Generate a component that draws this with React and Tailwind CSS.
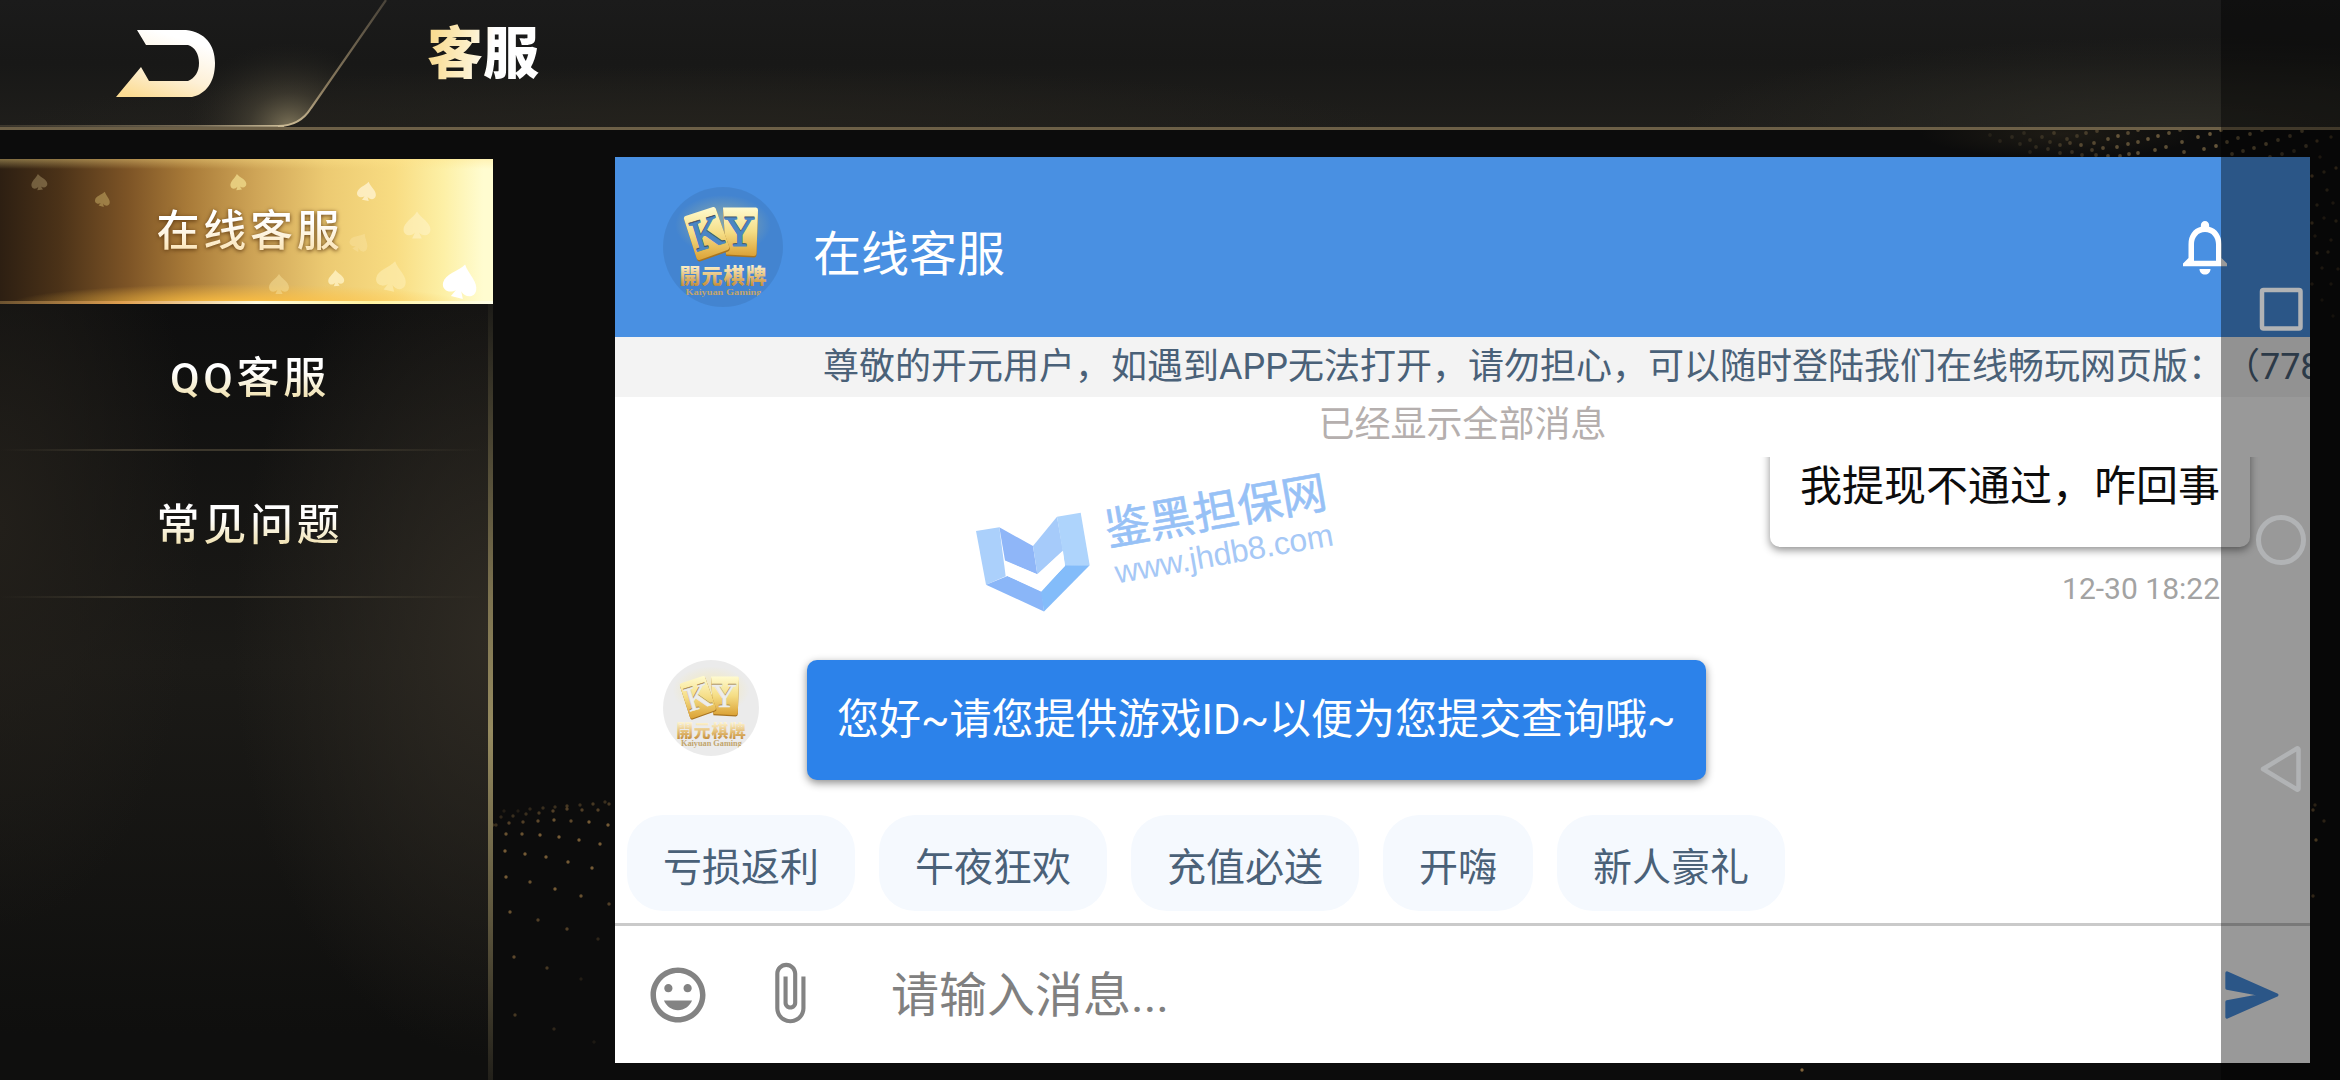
import React from "react";

const CHIPS = ["亏损返利", "午夜狂欢", "充值必送", "开嗨", "新人豪礼"];

const SPADES = [
  { x: 39, y: 37, s: 16, o: 0.35, r: -8, c: "#d8c48c" },
  { x: 103, y: 54, s: 15, o: 0.5, r: 14, c: "#cdb469" },
  { x: 238, y: 37, s: 16, o: 0.8, r: -8, c: "#efd98a" },
  { x: 367, y: 46, s: 19, o: 0.8, r: 10, c: "#fff3cf" },
  { x: 417, y: 80, s: 27, o: 0.5, r: 0, c: "#fff6cf" },
  { x: 360, y: 97, s: 19, o: 0.35, r: 30, c: "#fbe7ae" },
  { x: 279, y: 139, s: 20, o: 0.5, r: 0, c: "#f7e19c" },
  { x: 336, y: 133, s: 16, o: 0.8, r: -5, c: "#fff3c4" },
  { x: 392, y: 131, s: 30, o: 0.6, r: 12, c: "#fdeeb4" },
  { x: 461, y: 136, s: 34, o: 1, r: 14, c: "#ffffff" },
];

const LOWER_DOTS = [
  [493, 825, 0.4], [501, 817, 0.3], [513, 816, 0.4], [526, 814, 0.4], [539, 813, 0.5], [553, 811, 0.6], [567, 809, 0.6], [582, 810, 0.6], [598, 810, 0.6],
  [504, 811, 0.2], [518, 811, 0.2], [530, 809, 0.3], [543, 808, 0.4], [555, 807, 0.4], [567, 806, 0.5], [580, 805, 0.4], [593, 804, 0.5], [605, 802, 0.4], [609, 804, 0.5],
  [496, 825, 0.4], [509, 823, 0.6], [523, 822, 0.6], [538, 821, 0.7], [554, 820, 0.8], [571, 821, 0.7], [589, 822, 0.9], [608, 825, 0.9],
  [506, 834, 0.8], [522, 834, 0.8], [540, 835, 0.9], [559, 837, 0.9], [579, 840, 0.9], [600, 844, 0.9],
  [505, 851, 0.9], [525, 854, 0.9], [546, 857, 0.9], [568, 862, 0.9], [592, 868, 0.9],
  [506, 877, 0.9], [530, 882, 0.8], [555, 889, 0.9], [581, 896, 0.8], [609, 904, 0.6],
  [510, 912, 0.8], [538, 920, 0.6], [567, 929, 0.6], [598, 939, 0.3],
  [514, 957, 0.7], [547, 968, 0.5], [581, 979, 0.2],
  [515, 1015, 0.5], [554, 1029, 0.3], [594, 1042, 0.15],
  [477, 836, 0.3], [487, 850, 0.3], [484, 873, 0.5], [483, 904, 0.5], [481, 946, 0.5], [477, 1002, 0.7],
];

const SIDE_DOTS = [
  [2317, 141, 0.5], [2331, 137, 0.4], [2320, 157, 0.3], [2336, 168, 0.5], [2312, 176, 0.6], [2324, 172, 0.4], [2327, 190, 0.4], [2317, 205, 0.4], [2333, 203, 0.3],
  [2312, 223, 0.5], [2324, 218, 0.3], [2336, 221, 0.4], [2315, 236, 0.3], [2331, 240, 0.3], [2317, 253, 0.5], [2328, 252, 0.4], [2338, 269, 0.3], [2322, 268, 0.3],
  [2312, 284, 0.3], [2331, 284, 0.25], [2322, 300, 0.2], [2333, 316, 0.2],
  [2315, 805, 0.5], [2313, 810, 0.7], [2324, 821, 0.5], [2316, 840, 0.9], [2313, 896, 0.6],
  [1802, 1070, 1],
];

const TOP_DOTS = [
  [2042, 137, 0.4], [2054, 133, 0.5], [2067, 139, 0.5], [2077, 136, 0.5], [2086, 133, 0.6], [2097, 131, 0.6],
  [2060, 145, 0.5], [2070, 143, 0.6], [2081, 145, 0.8], [2094, 143, 0.8], [2108, 139, 0.9], [2118, 136, 1], [2128, 133, 0.8], [2138, 130, 0.8],
  [2092, 150, 0.6], [2103, 148, 0.8], [2117, 147, 0.9], [2128, 144, 0.9], [2138, 142, 0.9], [2148, 139, 1], [2158, 136, 1], [2169, 133, 0.9], [2180, 130, 0.7],
  [2096, 155, 0.5], [2108, 156, 0.7], [2120, 156, 0.7], [2129, 154, 0.8], [2138, 153, 0.9], [2155, 150, 0.9], [2166, 147, 0.9], [2182, 142, 0.9], [2198, 137, 1], [2210, 134, 1], [2221, 130, 1],
  [2184, 152, 0.8], [2204, 149, 0.9], [2216, 146, 1], [2227, 142, 0.9], [2238, 138, 0.9], [2250, 134, 1], [2262, 130, 0.9],
  [2232, 154, 0.8], [2243, 151, 0.8], [2254, 148, 1], [2266, 144, 1], [2278, 140, 0.8], [2290, 136, 0.7], [2302, 131, 0.8],
  [2270, 157, 0.7], [2282, 154, 0.6], [2294, 151, 0.5], [2306, 146, 0.7],
  [1990, 135, 0.2], [2000, 141, 0.25], [2012, 137, 0.3], [2020, 144, 0.3], [2030, 140, 0.35], [2024, 133, 0.3], [2036, 147, 0.35], [2048, 149, 0.4], [2050, 142, 0.4], [2030, 152, 0.25], [2060, 153, 0.4], [2072, 152, 0.45], [2082, 155, 0.45],
];

function Backdrop() {
  return (
    <svg className="pointer-events-none absolute inset-0" width="2340" height="1080" viewBox="0 0 2340 1080">
      <defs>
        <radialGradient id="haze">
          <stop offset="0" stopColor="#4a402a" stopOpacity="0.3" />
          <stop offset="1" stopColor="#4a402a" stopOpacity="0" />
        </radialGradient>
      </defs>
      <ellipse cx="2060" cy="134" rx="140" ry="24" fill="url(#haze)" />
      {TOP_DOTS.map(([x, y, o], i) => (
        <circle key={i} cx={x} cy={y} r="1.9" fill="#65553a" opacity={o} />
      ))}
      {LOWER_DOTS.concat(SIDE_DOTS).map(([x, y, o], i) => (
        <circle key={i} cx={x} cy={y} r="1.7" fill="#80633a" opacity={o} />
      ))}
    </svg>
  );
}

function HeaderArt() {
  return (
    <svg className="absolute left-0 top-0" width="440" height="130" viewBox="0 0 440 130">
      <defs>
        <linearGradient id="tabEdge" x1="0" y1="1" x2="0" y2="0">
          <stop offset="0" stopColor="#c9b893" />
          <stop offset="0.3" stopColor="#8a7b5f" />
          <stop offset="1" stopColor="#4a443a" />
        </linearGradient>
        <linearGradient id="tabBase" x1="0" x2="1">
          <stop offset="0" stopColor="#5a5140" stopOpacity="0.5" />
          <stop offset="0.7" stopColor="#7d715a" />
          <stop offset="1" stopColor="#cdbd98" />
        </linearGradient>
        <radialGradient id="tabGlow" gradientUnits="userSpaceOnUse" cx="290" cy="126" r="105" gradientTransform="translate(290 126) scale(1 0.8) translate(-290 -126)">
          <stop offset="0" stopColor="#8b8062" stopOpacity="0.85" />
          <stop offset="0.4" stopColor="#5b5442" stopOpacity="0.45" />
          <stop offset="1" stopColor="#2a2822" stopOpacity="0" />
        </radialGradient>
        <linearGradient id="arrow" x1="0.2" y1="1" x2="0.6" y2="0.1">
          <stop offset="0" stopColor="#fcdc93" />
          <stop offset="0.45" stopColor="#fdf0d6" />
          <stop offset="1" stopColor="#ffffff" />
        </linearGradient>
      </defs>
      <path d="M0 0H386L311 108Q300 126 278 126H0Z" fill="url(#tabGlow)" />
      <path d="M386 0L311 108Q300 126 278 126" fill="none" stroke="url(#tabEdge)" strokeWidth="2.2" />
      <rect x="0" y="125" width="284" height="1.8" fill="url(#tabBase)" />
      <path d="M137 30H186C205 32 215 45 215 63C215 82 206 94 192 97H116L141 67L149 81H188C195 78 199 72 199 63C199 54 195 47 188 45H146Z" fill="url(#arrow)" />
    </svg>
  );
}

function Spade({ x, y, s, o, r, c }) {
  return (
    <g transform={`translate(${x} ${y}) rotate(${r}) scale(${s / 20})`} opacity={o}>
      <path d="M0-10C3-5 10-2 10 3.4C10 8 4.500 9 1.600 5.800L3.600 10H-3.600L-1.600 5.800C-4.500 9-10 8-10 3.400C-10-2-3-5 0-10Z" fill={c} />
    </g>
  );
}

function NavItem({ label, active }) {
  if (active) {
    return (
      <div className="relative flex h-[145px] items-center justify-center overflow-hidden bg-[linear-gradient(90deg,#2d1f12_0%,#4b3218_12%,#7d5426_26%,#a87a38_38%,#cfa557_52%,#ecca72_66%,#f8dc82_80%,#fdf0a6_90%,#fffcd0_98%)]">
        <div className="absolute inset-0 bg-[radial-gradient(ellipse_230px_20px_at_240px_100%,#ffc040_0%,transparent_100%)]" />
        <div className="absolute inset-x-0 top-0 h-[10px] bg-[linear-gradient(180deg,#ffe48c66,transparent)]" />
        <div className="absolute inset-x-0 bottom-0 h-[3px] bg-[linear-gradient(90deg,#6b5230,#e0a050_25%,#fffbe0_52%,#fff2a0_75%,#ffffe8)]" />
        <svg className="absolute left-0 top-0" width="493" height="145" viewBox="0 0 493 145">
          {SPADES.map((p, i) => (
            <Spade key={i} {...p} y={p.y - 14} />
          ))}
        </svg>
        <span className="relative mt-[3px] ml-[7px] bg-[linear-gradient(180deg,#ffffff_30%,#fbe7bd_75%)] bg-clip-text pb-1 text-[43px] leading-[56px] font-medium tracking-[3.700px] text-transparent drop-shadow-[0_1px_2px_#5c3710]">
          {label}
        </span>
      </div>
    );
  }
  return (
    <div className="relative flex h-[147px] items-center justify-center">
      <span className="mt-[5px] ml-[7px] bg-[linear-gradient(180deg,#ffffff_35%,#f1e3b4_78%)] bg-clip-text pb-1 text-[43px] leading-[56px] font-medium tracking-[3.700px] text-transparent">
        {label}
      </span>
      <div className="absolute inset-x-0 bottom-0 h-[2px] bg-[linear-gradient(90deg,transparent,#3c372c_25%,#3c372c_70%,transparent_98%)]" />
    </div>
  );
}

function KyLogo({ id, size, letter, edge }) {
  return (
    <svg width={size} height={size} viewBox="0 0 120 120" className="shrink-0">
      <defs>
        <linearGradient id={id + "card"} x1="0" y1="0" x2="0" y2="1">
          <stop offset="0" stopColor="#fffbd0" />
          <stop offset="0.5" stopColor="#f5dd85" />
          <stop offset="1" stopColor="#dba236" />
        </linearGradient>
        <linearGradient id={id + "txt"} x1="0" y1="0" x2="0" y2="1">
          <stop offset="0.2" stopColor="#fdf3cf" />
          <stop offset="0.6" stopColor="#e2bb72" />
          <stop offset="1" stopColor="#b97c26" />
        </linearGradient>
        <radialGradient id={id + "glow"}>
          <stop offset="0.3" stopColor="#ffe46a" stopOpacity="0.7" />
          <stop offset="1" stopColor="#ffe46a" stopOpacity="0" />
        </radialGradient>
        <clipPath id={id + "clip"}>
          <circle cx="60" cy="60" r="60" />
        </clipPath>
      </defs>
      <circle cx="60" cy="60" r="60" fill="#000000" opacity="0.08" />
      <g clipPath={`url(#${id}clip)`}>
        <ellipse cx="60" cy="38" rx="48" ry="30" fill={`url(#${id}glow)`} opacity="0.45" />
        <path d="M60 20.500H93Q95 20.500 95 23L93.500 66Q93.400 69 91 69L63 67.500Z" fill="#a87420" transform="translate(0 1.500)" />
        <path d="M60 20.500H93Q95 20.500 95 23L93.500 66Q93.400 69 91 69L63 67.500Z" fill={`url(#${id}card)`} />
        <path d="M22.500 29L50 20Q52 19.500 52.700 21.500L66 59Q67 62 64.500 63L36.500 73Q34.300 73.500 33.600 71.300L21 32Q20.500 29.800 22.500 29Z" fill="#a87420" transform="translate(0.500 1.500)" />
        <path d="M22.500 29L50 20Q52 19.500 52.700 21.500L66 59Q67 62 64.500 63L36.500 73Q34.300 73.500 33.600 71.300L21 32Q20.500 29.800 22.500 29Z" fill={`url(#${id}card)`} />
        <g className="font-['Liberation_Serif',serif]" fontSize="43" textAnchor="middle">
          <text transform="translate(47.500 59) rotate(-17)" fill={edge} stroke={edge} strokeWidth="0.800">K</text>
          <text transform="translate(47.900 60.200) rotate(-17)" fill={letter} stroke={letter} strokeWidth="0.800">K</text>
          <text x="76.500" y="58" fill={edge} stroke={edge} strokeWidth="0.800">Y</text>
          <text x="76.900" y="59.200" fill={letter} stroke={letter} strokeWidth="0.800">Y</text>
        </g>
        <text x="16.500" y="96" textLength="87" fontSize="21" className="font-['Noto_Sans_CJK_TC',sans-serif] font-black" fill={`url(#${id}txt)`}>
          開元棋牌
        </text>
        <text x="22.500" y="107.500" textLength="76" lengthAdjust="spacingAndGlyphs" fontSize="9" className="font-['Liberation_Serif',serif] font-bold" fill="#c2a56c">
          Kaiyuan Gaming
        </text>
      </g>
    </svg>
  );
}

function Watermark() {
  return (
    <svg className="absolute left-[285px] top-[-17px]" width="460" height="200" viewBox="0 0 460 200">
      <polygon points="76,91 99.300,87.300 105.700,136.300 86,144.700" fill="#abd0fb" />
      <polygon points="99.300,87.300 133,106 137.300,134.300 105,120.500" fill="#8fb6f8" />
      <polygon points="133,106 157,76.700 163,110.500 137.300,134.300" fill="#a6cbfa" />
      <polygon points="157,76.700 180.700,72.700 189.700,125.300 165,126" fill="#aed4fc" />
      <polygon points="86,144.700 107.500,136 142,152 144,171.500" fill="#8ab6f8" />
      <polygon points="144,171.500 141,152 165,125.500 189.700,125.300" fill="#83bcfa" />
      <polygon points="105,121 137.500,134.500 163,111 165,126 141,151 107.500,136" fill="#ffffff" />
      <g transform="translate(208.500 107) rotate(-10)">
        <text x="0" y="-1" fontSize="45" textLength="224" className="font-['Noto_Sans_CJK_SC',sans-serif]" fill="#97c1f6" stroke="#97c1f6" strokeWidth="0.600">
          鉴黑担保网
        </text>
      </g>
      <g transform="translate(217 143.500) rotate(-10)">
        <text x="0" y="0" fontSize="32" textLength="221" className="font-['Liberation_Sans',sans-serif]" fill="#a6c8f6">
          www.jhdb8.com
        </text>
      </g>
    </svg>
  );
}

function ChatPanel() {
  return (
    <section className="flex h-[906px] w-[1695px] flex-col bg-white">
      <div className="flex h-[180px] shrink-0 items-center bg-[#4990e2] pr-[72px] pl-12">
        <KyLogo id="a" size={120} letter="#4a86c4" edge="#3f5468" />
        <h2 className="ml-[30px] flex-1 pt-4 text-[48px] leading-[60px] text-white">在线客服</h2>
        <svg width="66" height="66" viewBox="0 0 24 24" fill="#ffffff">
          <path d="M12 22c1.100 0 2-.7 2-2h-4c0 1.300.9 2 2 2zm6-6v-5c0-3.070-1.630-5.640-4.500-6.320V4c0-.83-.67-1.500-1.500-1.500s-1.500.67-1.500 1.500v.68C7.640 5.360 6 7.920 6 11v5l-2 2v1h16v-1l-2-2zm-2 1H8v-6c0-2.480 1.510-4.500 4-4.500s4 2.020 4 4.500v6z" />
        </svg>
      </div>
      <div className="h-[60px] shrink-0 overflow-hidden bg-[#f3f3f3] pl-[208px] text-[36px] leading-[60px] whitespace-nowrap text-[#4a6178] [text-spacing-trim:space-all]">
        尊敬的开元用户，如遇到APP无法打开，请勿担心，可以随时登陆我们在线畅玩网页版：（778
      </div>
      <div className="h-[60px] shrink-0 text-center text-[36px] leading-[56px] text-[#b5afae]">已经显示全部消息</div>
      <div className="relative flex h-[349px] shrink-0 flex-col overflow-hidden">
        <div className="-mt-[30px] mr-[60px] flex h-[120px] shrink-0 items-center self-end rounded-[10px] bg-white px-[30px] text-[42px] leading-[60px] text-[#0c0c0c] shadow-[0_3px_8px_rgba(0,0,0,0.45)]">
          我提现不通过，咋回事
        </div>
        <time className="mt-6 mr-[90px] self-end text-[30px] leading-[36px] text-[#a3a3a3]">12-30 18:22</time>
        <div className="mt-[53px] ml-12 flex items-start gap-12">
          <KyLogo id="b" size={96} letter="#ededeb" edge="#a88c55" />
          <div className="flex h-[120px] items-center rounded-[10px] bg-[#2c82ea] px-[30px] text-[42px] leading-[60px] whitespace-nowrap text-white shadow-[0_3px_8px_rgba(0,0,0,0.45)]">
            您好~请您提供游戏ID~以便为您提交查询哦~
          </div>
        </div>
        <Watermark />
      </div>
      <div className="flex h-[120px] shrink-0 items-start gap-6 border-b-[3px] border-[#cacaca] pt-[9px] pl-3">
        {CHIPS.map((chip) => (
          <button key={chip} className="h-24 rounded-[36px] bg-[#f5f9fe] px-9 pt-[10px] text-[39px] leading-[86px] text-[#4a6178]">
            {chip}
          </button>
        ))}
      </div>
      <div className="flex flex-1 items-center pl-[30px]">
        <svg width="66" height="66" viewBox="0 0 24 24" fill="#838383">
          <path d="M11.990 2C6.470 2 2 6.480 2 12s4.470 10 9.990 10C17.520 22 22 17.520 22 12S17.520 2 11.990 2zM12 20c-4.420 0-8-3.580-8-8s3.580-8 8-8 8 3.580 8 8-3.580 8-8 8zm3.500-9c.83 0 1.500-.67 1.500-1.500S16.330 8 15.500 8 14 8.670 14 9.500s.67 1.500 1.500 1.500zm-7 0c.83 0 1.500-.67 1.500-1.500S9.330 8 8.500 8 7 8.670 7 9.500 7.670 11 8.500 11zm3.500 6.500c2.330 0 4.310-1.460 5.110-3.500H6.890c.8 2.040 2.780 3.500 5.110 3.500z" />
        </svg>
        <svg className="mb-1 ml-[45px]" width="66" height="66" viewBox="0 0 24 24" fill="#838383">
          <path d="M16.500 6v11.500c0 2.210-1.790 4-4 4s-4-1.790-4-4V5c0-1.380 1.120-2.500 2.500-2.500s2.500 1.120 2.500 2.500v10.500c0 .55-.45 1-1 1s-1-.45-1-1V6H10v9.500c0 1.380 1.120 2.500 2.500 2.500s2.500-1.120 2.500-2.500V5c0-2.210-1.790-4-4-4S7 2.790 7 5v12.500c0 3.040 2.460 5.500 5.500 5.500s5.500-2.460 5.500-5.500V6h-1.500z" />
        </svg>
        <div className="ml-[69px] flex-1 pt-[3px] text-[48px] leading-[60px] text-[#808080]">请输入消息...</div>
        <svg className="mr-[25px]" width="66" height="66" viewBox="0 0 24 24" fill="#4990e2" stroke="#4990e2" strokeWidth="1.200" strokeLinejoin="round">
          <path d="M2.900 4L21 12L2.900 20V14.500L16 12L2.900 9.500Z" />
        </svg>
      </div>
    </section>
  );
}

function SystemNav() {
  return (
    <div className="absolute inset-y-0 right-0 w-[119px] bg-black/40">
      <svg width="119" height="1080" viewBox="2221 0 119 1080" fill="none" stroke="#b1b3b5" strokeLinejoin="round">
        <rect x="2262" y="290" width="38.500" height="38.500" rx="1.500" strokeWidth="4.500" />
        <circle cx="2281" cy="540" r="22.500" strokeWidth="5" />
        <path d="M2263 769L2297 748.500Q2298.500 748 2298.500 749.500V788.500Q2298.500 790 2297 789.500Z" strokeWidth="4.500" />
      </svg>
    </div>
  );
}

export default function App() {
  return (
    <div className="relative flex h-[1080px] w-[2340px] flex-col overflow-hidden bg-[#0c0c0c] font-[Roboto,'Noto_Sans_CJK_SC',sans-serif]">
      <Backdrop />
      <header className="relative h-[130px] shrink-0 border-b-[3px] border-[#6d6047] bg-[radial-gradient(ellipse_500px_90px_at_2180px_100%,#2b2a24_0%,transparent_100%),radial-gradient(ellipse_700px_60px_at_700px_100%,#24221d_0%,transparent_100%),linear-gradient(180deg,#1b1b1b,#181817_50%,#1f1e1b)]">
        <HeaderArt />
        <h1 className="ml-[427px] w-fit bg-[linear-gradient(100deg,#f9dc92_10%,#fdf0cd_42%,#ffffff_58%)] bg-clip-text pt-[13px] font-['Noto_Sans_CJK_SC',sans-serif] text-[56px] leading-[72px] font-black text-transparent">
          客服
        </h1>
      </header>
      <div className="relative flex flex-1 items-start">
        <nav className="relative mt-[29px] h-[921px] w-[493px] bg-[radial-gradient(ellipse_260px_420px_at_100%_52%,#2e2a23_0%,transparent_100%),radial-gradient(ellipse_200px_400px_at_0%_40%,#221f1a_0%,transparent_100%),linear-gradient(180deg,#0e0e0e_16%,#1b1a17_55%,#0f0f0e_95%)]">
          <div className="absolute top-[145px] right-0 bottom-0 w-[5px] bg-[linear-gradient(180deg,#1d1c18,#7d7350_38%,#968b60_55%,#5b543c_80%,#22201a)]" />
          <NavItem label="在线客服" active />
          <NavItem label="QQ客服" />
          <NavItem label="常见问题" />
        </nav>
        <div className="mt-[27px] ml-[122px]">
          <ChatPanel />
        </div>
      </div>
      <SystemNav />
    </div>
  );
}
